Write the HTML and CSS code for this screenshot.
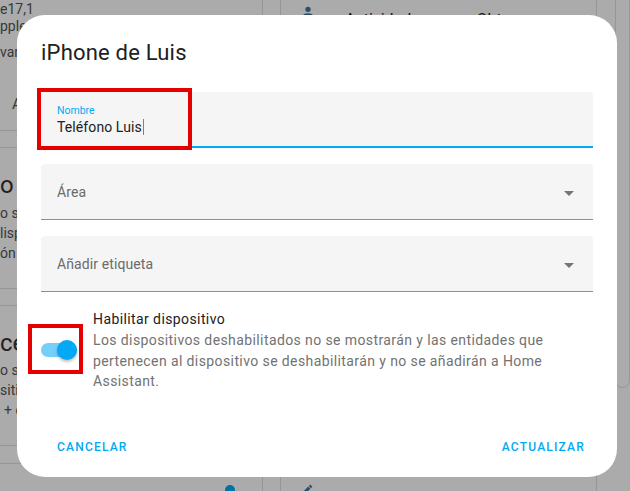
FILE: index.html
```html
<!DOCTYPE html>
<html lang="es">
<head>
<meta charset="utf-8">
<title>iPhone de Luis</title>
<link rel="stylesheet" href="styles.css">
</head>
<body>
<div class="page">
  <div class="col col-left">
    <section class="card card-a">
      <div class="bl">e17,1</div>
      <div class="bl">pple</div>
      <div class="bl bl-gap">vard</div>
      <div class="bl bl-btn">A</div>
    </section>
    <section class="card card-b">
      <div class="bh">o</div>
      <div class="bl bl-first">o s</div>
      <div class="bl">lisp</div>
      <div class="bl">ón</div>
    </section>
    <section class="card card-c">
      <div class="bh">ce</div>
      <div class="bl bl-first2">o s</div>
      <div class="bl">siti</div>
      <div class="bl bl-plus">+ c</div>
    </section>
    <section class="card card-d">
      <span class="bdot"></span>
    </section>
  </div>
  <div class="col col-mid">
    <section class="card card-m">
      <div class="mhead">
        <svg class="micon" viewBox="0 0 24 24"><path d="M12,4A4,4 0 0,1 16,8A4,4 0 0,1 12,12A4,4 0 0,1 8,8A4,4 0 0,1 12,4M12,14C16.42,14 20,15.79 20,18V20H4V18C4,15.79 7.58,14 12,14Z"/></svg>
        <span class="mtitle">Actividad</span>
        <span class="mside">Obtener</span>
      </div>
      <div class="mfoot">
        <svg class="ficon" viewBox="0 0 24 24"><path d="M20.71,7.04C21.1,6.65 21.1,6 20.71,5.63L18.37,3.29C18,2.9 17.35,2.9 16.96,3.29L15.12,5.12L18.87,8.87M3,17.25V21H6.75L17.81,9.93L14.06,6.18L3,17.25Z"/></svg>
      </div>
    </section>
  </div>
  <div class="col col-right">
    <section class="card card-r"></section>
  </div>
</div>

<div class="scrim"></div>

<div class="dialog" role="dialog">
  <h2 class="dialog-title">iPhone de Luis</h2>
  <div class="fields">
    <div class="field field-focused">
      <span class="field-label">Nombre</span>
      <span class="field-input">Teléfono Luis<span class="caret"></span></span>
    </div>
    <div class="field field-select">
      <span class="field-text">Área</span>
      <svg class="arrow" viewBox="0 0 24 24"><polygon points="7,10 12,15 17,10"/></svg>
    </div>
    <div class="field field-select">
      <span class="field-text">Añadir etiqueta</span>
      <svg class="arrow" viewBox="0 0 24 24"><polygon points="7,10 12,15 17,10"/></svg>
    </div>
  </div>
  <div class="toggle-row">
    <div class="switch">
      <span class="track"></span>
      <span class="knob"></span>
    </div>
    <div class="toggle-text">
      <div class="toggle-title">Habilitar dispositivo</div>
      <div class="toggle-desc">Los dispositivos deshabilitados no se mostrarán y las entidades que pertenecen al dispositivo se deshabilitarán y no se añadirán a Home Assistant.</div>
    </div>
  </div>
  <div class="actions">
    <button class="btn">Cancelar</button>
    <button class="btn">Actualizar</button>
  </div>
  <div class="mark mark-name"></div>
  <div class="mark mark-switch"></div>
</div>
</body>
</html>
```
FILE: styles.css
```css
* { box-sizing: border-box; }

body {
  margin: 0;
  width: 630px;
  height: 491px;
  overflow: hidden;
  position: relative;
  background: #fff;
  font-family: Roboto, "Liberation Sans", sans-serif;
}

/* ---------- background page ---------- */
.page {
  display: grid;
  grid-template-columns: 283px 317px 1fr;
  column-gap: 17px;
  margin-left: -20px;
  height: 491px;
  overflow: hidden;
  white-space: nowrap;
}

.col {
  display: flex;
  flex-direction: column;
  gap: 16px;
  min-width: 0;
}

.card {
  background: #fff;
  border: 1px solid #e0e0e0;
  border-radius: 12px;
  overflow: hidden;
  flex: none;
}

.card-a {
  margin-top: -20px;
  height: 151px;
  padding: 20px 0 0 19px;
}

.card-b {
  height: 142px;
  padding: 21px 0 0 19px;
}

.card-c {
  height: 141px;
  padding: 21px 0 0 19px;
}

.card-d {
  margin-top: 1px;
  height: 60px;
  padding: 21px 0 0 244px;
}

.bl {
  font-size: 14px;
  line-height: 17px;
  color: #555;
}

.card-b .bl, .card-c .bl { line-height: 20px; }

.bl-gap { margin-top: 9px; }
.bl-btn { margin-top: 35px; margin-left: 12px; font-size: 15px; }
.bl-first { margin-top: 2px; }
.bl-first2 { margin-top: 1px; }
.bl-plus { margin-left: 4px; }

.bh {
  font-size: 24px;
  line-height: 32px;
  color: #333;
}

.bdot {
  display: block;
  width: 10px;
  height: 10px;
  border-radius: 50%;
  background: #03a9f4;
}

.card-m {
  margin-top: -20px;
  height: 531px;
  display: flex;
  flex-direction: column;
  padding: 23px 19px 13px 19px;
}

.mhead {
  display: flex;
  align-items: flex-start;
}

.micon {
  width: 16px;
  height: 16px;
  fill: #44739e;
}

.mtitle {
  margin-left: 29px;
  margin-top: 6px;
  font-size: 16px;
  line-height: 20px;
  color: #212121;
}

.mside {
  margin-left: auto;
  margin-right: 44px;
  margin-top: 6px;
  font-size: 16px;
  line-height: 20px;
  color: #212121;
}

.mfoot { margin-top: auto; }

.ficon {
  display: block;
  width: 14px;
  height: 14px;
  fill: #44739e;
}

.col-right { margin-left: 1px; }

.card-r {
  margin-top: -20px;
  height: 408px;
}

.scrim {
  position: fixed;
  inset: 0;
  background: rgba(0, 0, 0, 0.33);
}

/* ---------- dialog ---------- */
.dialog {
  position: absolute;
  left: 17px;
  top: 15px;
  width: 600px;
  height: 462px;
  padding: 22px 24px 12px;
  border-radius: 28px;
  background: #fff;
  display: flex;
  flex-direction: column;
}

.dialog-title {
  margin: 0 0 23px;
  font-size: 22px;
  line-height: 32px;
  font-weight: 400;
  letter-spacing: 0.2px;
  color: #212121;
}

.fields {
  display: flex;
  flex-direction: column;
  gap: 16px;
}

.field {
  height: 56px;
  background: #f5f5f5;
  border-radius: 4px 4px 0 0;
  border-bottom: 1px solid #8e8e8e;
  padding: 0 12px 0 16px;
  display: flex;
  align-items: center;
}

.field-focused {
  border-bottom: 2px solid #03a9f4;
  flex-direction: column;
  align-items: flex-start;
  padding-top: 13px;
}

.field-label {
  font-size: 10.5px;
  line-height: 12px;
  color: #03a9f4;
}

.field-input {
  font-size: 14px;
  line-height: 20px;
  color: #212121;
  letter-spacing: 0.1px;
}

.caret {
  display: inline-block;
  width: 1px;
  height: 16px;
  margin-left: 1px;
  vertical-align: -3px;
  background: #03a9f4;
}

.field-text {
  flex: 1;
  font-size: 14px;
  line-height: 20px;
  letter-spacing: 0.1px;
  color: #6b6b6b;
}

.arrow {
  width: 24px;
  height: 24px;
  margin-top: 3px;
  fill: #757575;
}

.toggle-row {
  margin-top: 16px;
  display: flex;
  align-items: center;
  gap: 16px;
}

.switch {
  position: relative;
  flex: none;
  width: 36px;
  height: 20px;
  display: flex;
  align-items: center;
}

.track {
  width: 36px;
  height: 14px;
  border-radius: 7px;
  background: #74cff9;
}

.knob {
  position: absolute;
  right: 0;
  top: 0;
  width: 20px;
  height: 20px;
  border-radius: 50%;
  background: #03a9f4;
  box-shadow: 0 2px 3px rgba(0, 0, 0, 0.25);
}

.toggle-title {
  font-size: 14px;
  line-height: 22px;
  letter-spacing: 0.4px;
  color: #212121;
}

.toggle-desc {
  font-size: 14px;
  line-height: 20.5px;
  letter-spacing: 0.4px;
  color: #727272;
}

.actions {
  margin-top: auto;
  display: flex;
  justify-content: space-between;
  padding-left: 8px;
}

.btn {
  height: 36px;
  padding: 0 8px;
  border: 0;
  background: none;
  font-family: Roboto, "Liberation Sans", sans-serif;
  font-size: 12px;
  font-weight: 500;
  letter-spacing: 1.2px;
  text-transform: uppercase;
  color: #03a9f4;
}

.mark {
  position: absolute;
  border: 4px solid #e50000;
}

.mark-name {
  left: 20px;
  top: 73px;
  width: 155px;
  height: 62px;
}

.mark-switch {
  left: 11px;
  top: 309px;
  width: 55px;
  height: 50px;
}
```
